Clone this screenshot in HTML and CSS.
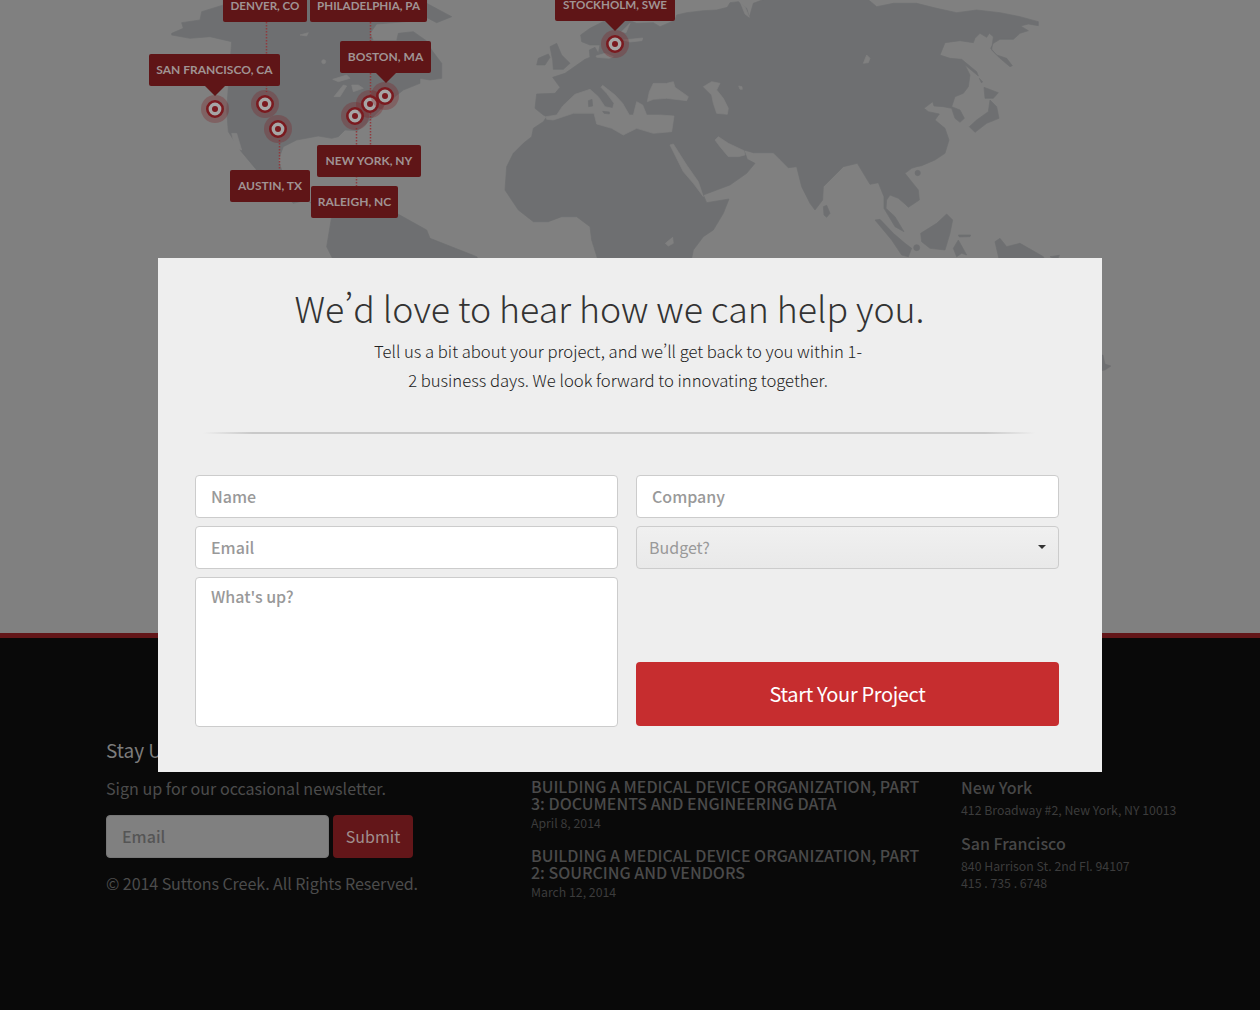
FILE: index.html
```html
<!DOCTYPE html>
<html lang="en">
<head>
<meta charset="utf-8">
<title>Suttons Creek</title>
<link rel="stylesheet" href="styles.css">
</head>
<body>
<section class="map">
  <svg class="map-art" viewBox="0 0 1260 633" width="1260" height="633" aria-hidden="true">
    <g class="land" transform="translate(490 0) scale(.33333)">
      <path d="M135,325 L140,282 195,280 210,262 188,232 225,220 285,178 300,172 298,150 315,142 325,160 330,135 300,135 275,125 272,105 300,85 345,62 420,62 440,70 490,68 510,80 545,65 555,60 560,45 590,38 640,32 680,30 712,22 720,8 745,5 770,25 778,52 790,10 830,-5 1130,-5 1160,20 1210,10 1280,10 1340,25 1400,38 1460,30 1530,38 1590,50 1645,65 1645,77 1615,72 1592,78 1615,92 1590,100 1570,118 1530,118 1510,130 1502,145 1520,165 1550,175 1567,197 1560,200 1530,175 1505,150 1510,110 1498,100 1490,112 1470,100 1455,115 1450,128 1410,122 1365,128 1350,165 1380,175 1415,178 1460,215 1465,228 1425,195 1440,225 1435,260 1420,280 1395,290 1385,320 1410,330 1423,355 1410,367 1395,355 1385,325 1360,320 1332,318 1328,305 1302,325 1315,335 1348,342 1335,360 1365,385 1377,420 1365,460 1335,480 1295,497 1280,500 1265,505 1245,520 1265,545 1285,570 1288,600 1255,622 1245,612 1225,595 1200,585 1190,600 1188,625 1215,650 1242,695 1215,680 1182,625 1182,590 1165,548 1140,553 1102,490 1060,500 1000,560 998,600 975,630 960,610 935,560 920,500 895,503 870,478 850,458 790,458 762,450 772,478 795,490 770,520 720,555 680,570 640,585 650,608 717,597 700,640 670,690 640,710 610,750 600,800 330,800 305,720 300,680 260,650 215,650 175,665 130,665 85,630 45,570 50,500 70,460 100,430 125,410 130,385 160,365 170,350 160,345 Z"/>
      <path d="M180,140 L200,130 215,165 240,190 220,208 190,208 188,180 Z"/>
      <path d="M145,175 L175,162 180,172 165,195 140,195 Z"/>
    </g>
    <g class="sea" transform="translate(490 0) scale(.33333)">
      <path d="M168,350 L200,345 218,318 255,283 300,268 325,290 345,320 368,325 372,310 350,280 333,262 338,256 375,285 398,310 418,345 430,345 440,305 458,315 470,345 510,345 552,348 545,395 490,400 440,385 400,405 365,385 320,372 312,340 250,340 190,360 170,358 Z"/>
      <path d="M478,275 L490,250 530,250 550,245 555,262 595,290 590,302 530,295 490,298 472,305 Z"/>
      <path d="M640,260 L665,245 690,250 680,270 700,295 715,325 712,343 680,340 670,310 665,285 Z"/>
      <path d="M540,435 L550,432 590,495 625,545 640,590 610,550 580,515 Z"/>
      <path d="M675,420 L685,410 715,430 762,452 765,465 745,470 715,470 690,440 Z"/>
      <path d="M318,168 L345,160 370,170 358,175 320,172 Z"/>
      <path d="M400,120 L458,114 456,122 420,126 Z"/>
      <path d="M395,95 L420,70 408,98 Z"/>
      <path d="M746,258 L756,260 757,268 750,268 Z"/>
      <path d="M526,730 L548,712 550,730 535,738 Z"/>
      <path d="M750,5 L765,20 778,52 765,42 Z"/>
      <path d="M1120,190 L1130,165 1140,175 1135,188 Z"/>
    </g>
    <g class="land" transform="translate(490 0) scale(.33333)">
      <path d="M295,302 L306,298 308,318 296,320 Z"/>
      <path d="M338,334 L358,336 358,342 342,340 Z"/>
    </g>
    <g class="land" transform="translate(780 0) scale(.33333)">
      <circle cx="413" cy="519" r="8"/>
      <circle cx="410" cy="743" r="9"/>
      <path d="M130,620 L140,616 150,640 140,652 132,645 Z"/>
      <path d="M612,262 L655,278 640,295 615,295 Z"/>
      <path d="M630,300 L650,320 657,355 620,370 585,397 568,380 590,360 625,335 Z"/>
      <path d="M598,235 L608,246 604,248 Z"/>
      <path d="M285,660 L300,658 340,700 375,730 395,745 385,770 365,765 335,720 Z"/>
      <path d="M422,700 L470,670 500,642 518,660 510,700 495,750 450,745 425,725 Z"/>
      <path d="M520,745 L535,720 560,765 545,760 530,770 Z"/>
      <path d="M535,705 L572,705 570,710 538,711 Z"/>
      <path d="M645,725 L660,715 680,740 720,730 790,770 800,790 660,790 Z"/>
      <path d="M810,770 L838,766 832,780 Z"/>
    </g>
    <path class="land" d="M1100,355 L1103,355 1105,364 1111,366 1105,370 1100,371 Z"/>
    <g class="land" transform="translate(150 0) scale(.33333)">
      <path d="M65,100 L100,85 95,68 150,60 155,35 220,15 220,-5 830,-5 830,60 680,72 660,100 670,122 740,122 745,100 790,95 830,123 845,150 875,190 875,235 840,240 810,235 810,250 760,270 710,310 650,370 622,392 585,390 565,410 545,415 505,408 440,420 400,440 385,480 395,510 440,580 470,600 545,650 530,740 560,800 1000,800 980,770 840,715 830,690 740,640 570,650 545,650 470,600 430,610 320,510 270,450 235,395 230,330 235,260 245,125 180,110 120,115 65,105 Z"/>
      <path d="M830,10 L905,50 860,68 825,50 Z"/>
    </g>
    <g class="sea" transform="translate(150 0) scale(.33333)">
      <path d="M548,238 L590,225 600,235 565,245 Z"/>
      <path d="M552,290 L580,255 590,258 570,290 Z"/>
      <path d="M605,255 L625,255 640,265 610,275 Z"/>
      <circle cx="521" cy="185" r="6"/>
      <path d="M450,105 L475,98 470,108 Z"/>
      <path d="M245,400 L260,400 275,450 255,445 Z"/>
    </g>
    <g class="leaders">
      <path d="M266.5 22V92M370.5 22V100M279.5 140V170M370.5 110V145M356.5 128V186"/>
    </g>
    <g class="pin" transform="translate(215 109)"><circle class="halo" r="14"/><circle class="ring" r="7.7"/><circle class="dot" r="3"/></g>
    <g class="pin" transform="translate(265 104)"><circle class="halo" r="14"/><circle class="ring" r="7.7"/><circle class="dot" r="3"/></g>
    <g class="pin" transform="translate(278 129)"><circle class="halo" r="14"/><circle class="ring" r="7.7"/><circle class="dot" r="3"/></g>
    <g class="pin" transform="translate(355 116)"><circle class="halo" r="14"/><circle class="ring" r="7.7"/><circle class="dot" r="3"/></g>
    <g class="pin" transform="translate(370 104)"><circle class="halo" r="14"/><circle class="ring" r="7.7"/><circle class="dot" r="3"/></g>
    <g class="pin" transform="translate(385 96)"><circle class="halo" r="14"/><circle class="ring" r="7.7"/><circle class="dot" r="3"/></g>
    <g class="pin" transform="translate(615 44)"><circle class="halo" r="14"/><circle class="ring" r="7.7"/><circle class="dot" r="3"/></g>
  </svg>
  <span class="tag tag-small tag-denver">Denver, CO</span>
  <span class="tag tag-small tag-phila">Philadelphia, PA</span>
  <span class="tag tag-sf tag-arrow">San Francisco, CA</span>
  <span class="tag tag-boston tag-arrow">Boston, MA</span>
  <span class="tag tag-ny">New York, NY</span>
  <span class="tag tag-austin">Austin, TX</span>
  <span class="tag tag-raleigh">Raleigh, NC</span>
  <span class="tag tag-small tag-stockholm tag-arrow">Stockholm, SWE</span>
</section>

<footer class="footer">
  <div class="footer-col news-signup">
    <h2 class="footer-title">Stay Updated</h2>
    <p class="footer-copy">Sign up for our occasional newsletter.</p>
    <form class="signup">
      <input class="signup-input" type="text" placeholder="Email">
      <button class="signup-btn" type="button">Submit</button>
    </form>
    <p class="footer-copy footer-legal">© 2014 Suttons Creek. All Rights Reserved.</p>
  </div>
  <div class="footer-col posts">
    <article class="post">
      <h3 class="post-title">Building a Medical Device Organization, Part 3: Documents and Engineering Data</h3>
      <p class="post-date">April 8, 2014</p>
    </article>
    <article class="post">
      <h3 class="post-title">Building a Medical Device Organization, Part 2: Sourcing and Vendors</h3>
      <p class="post-date">March 12, 2014</p>
    </article>
  </div>
  <div class="footer-col offices">
    <section class="office">
      <h3 class="office-name">New York</h3>
      <p class="office-line">412 Broadway #2, New York, NY 10013</p>
    </section>
    <section class="office">
      <h3 class="office-name">San Francisco</h3>
      <p class="office-line">840 Harrison St. 2nd Fl. 94107</p>
      <p class="office-line">415 . 735 . 6748</p>
    </section>
  </div>
</footer>

<div class="modal">
  <header class="intro">
    <h1 class="intro-title">We’d love to hear how we can help you.</h1>
    <p class="intro-text">Tell us a bit about your project, and we’ll get back to you within 1-<br>2 business days. We look forward to innovating together.</p>
    <div class="divider"></div>
  </header>
  <form class="contact">
    <input class="field" type="text" placeholder="Name">
    <input class="field" type="text" placeholder="Company">
    <input class="field" type="text" placeholder="Email">
    <div class="select-wrap">
      <select class="select"><option>Budget?</option></select>
    </div>
    <textarea class="field field-area" placeholder="What's up?"></textarea>
    <button class="start" type="button">Start Your Project</button>
  </form>
</div>
</body>
</html>
```

FILE: styles.css
```css
* { box-sizing: border-box; }
html, body { margin: 0; padding: 0; }
body {
  position: relative;
  width: 1260px;
  height: 1010px;
  overflow: hidden;
  background: #090909;
  font-family: "Noto Sans CJK SC", "Source Sans Pro", "Open Sans", sans-serif;
  font-size: 16px;
}

/* map */
.map {
  position: relative;
  height: 633px;
  overflow: hidden;
  background: #808080;
}
.map-art { display: block; }
.land { fill: #6e6f71; stroke: #6e6f71; stroke-width: 2; stroke-linejoin: round; }
.sea { fill: #808080; stroke: #808080; stroke-width: 2; stroke-linejoin: round; }
path.land { stroke-width: .5; }
.leaders path { fill: none; stroke: #8f3a3e; stroke-width: 1.5; stroke-dasharray: 1.5 1.5; }
.halo { fill: #7f1d22; fill-opacity: .3; }
.ring { fill: #a6a6a6; stroke: #7a1a1f; stroke-width: 2.6; }
.dot { fill: #7a1a1f; }

.tag {
  position: absolute;
  height: 32px;
  padding: 0 2px;
  border-radius: 2px;
  background: #5f1517;
  color: #a09393;
  font-family: Lato, "Liberation Sans", sans-serif;
  font-size: 12px;
  font-weight: 700;
  line-height: 32px;
  text-align: center;
  text-transform: uppercase;
  white-space: nowrap;
}
.tag-small { font-size: 11.6px; }
.tag-arrow::after {
  content: "";
  position: absolute;
  left: 50%;
  top: 100%;
  margin-left: -10px;
  border: solid transparent;
  border-width: 10px 10px 0;
  border-top-color: #5f1517;
}
.tag-denver { left: 223px; top: -10px; width: 84px; }
.tag-phila { left: 310px; top: -10px; width: 117px; }
.tag-sf { left: 149px; top: 54px; width: 131px; }
.tag-boston { left: 340px; top: 41px; width: 91px; }
.tag-ny { left: 317px; top: 145px; width: 104px; }
.tag-austin { left: 230px; top: 170px; width: 80px; }
.tag-raleigh { left: 311px; top: 186px; width: 87px; }
.tag-stockholm { left: 555px; top: -11px; width: 120px; }

/* footer */
.footer {
  display: grid;
  grid-template-columns: 425px 430px 1fr;
  height: 377px;
  padding-left: 106px;
  border-top: 5px solid #631619;
  background: #090909;
}
.footer-col { min-width: 0; }
.news-signup { padding-top: 97px; }
.posts { padding-top: 140px; padding-right: 30px; }
.offices { padding-top: 138px; }
.footer-title {
  margin: 0 0 10px;
  color: #7c7c7c;
  font-size: 19px;
  font-weight: 400;
  line-height: 30px;
  white-space: nowrap;
}
.footer-copy {
  margin: 0;
  color: #4c4c4c;
  font-size: 16.1px;
  line-height: 26px;
}
.footer-legal { letter-spacing: -.1px; }
.signup { display: flex; gap: 4px; margin: 14px 0 12px; }
.signup-input {
  width: 223px;
  height: 43px;
  padding: 0 15px 2px;
  border: 1px solid #767676;
  border-radius: 4px;
  background: #808080;
  font: inherit;
  font-weight: 500;
}
.signup-input::placeholder { color: #555; opacity: 1; }
.signup-btn {
  width: 80px;
  height: 43px;
  padding: 0 0 2px;
  border: 0;
  border-radius: 4px;
  background: #631619;
  color: #a08f8f;
  font: inherit;
}
.post { margin-bottom: 15px; }
.post-title {
  margin: 0;
  color: #4a4a4a;
  font-size: 16px;
  font-weight: 500;
  line-height: 17px;
  text-transform: uppercase;
}
.post-date { margin: 3px 0 0; color: #3c3c3c; font-size: 12.3px; line-height: 17px; }
.office { margin-bottom: 13px; }
.office-name { margin: 0 0 4px; color: #474747; font-size: 16px; font-weight: 500; line-height: 22px; }
.office-line { margin: 0; color: #3c3c3c; font-size: 12.3px; line-height: 17px; }

/* modal */
.modal {
  position: absolute;
  left: 158px;
  top: 258px;
  width: 944px;
  height: 514px;
  padding: 23px 43px 0 37px;
  background: #eeeeee;
}
.intro { width: 846px; text-align: center; font-feature-settings: "pwid", "palt"; }
.intro-title {
  margin: 0 17px 2px 0;
  color: #333;
  font-size: 35.7px;
  font-weight: 300;
  line-height: 54px;
  white-space: nowrap;
}
.intro-text {
  margin: 0;
  color: #222;
  font-size: 16.65px;
  font-weight: 300;
  line-height: 29px;
}
.divider {
  height: 2px;
  margin: 37px 6px 41px 8px;
  background: linear-gradient(90deg, rgba(200,200,200,0), #c9c9c9 6%, #c9c9c9 94%, rgba(200,200,200,0));
}
.contact {
  display: grid;
  grid-template-columns: 423px 423px;
  grid-template-rows: 43px 43px 150px;
  column-gap: 18px;
  row-gap: 8px;
}
.field {
  display: block;
  width: 100%;
  padding: 0 15px 2px;
  border: 1px solid #ccc;
  border-radius: 4px;
  background: #fff;
  color: #333;
  font: inherit;
  font-weight: 500;
}
.field::placeholder { color: #999; opacity: 1; }
.field-area { height: 150px; padding-top: 6px; resize: none; }
.select-wrap { position: relative; }
.select-wrap::after {
  content: "";
  position: absolute;
  right: 13px;
  top: 19px;
  border: solid transparent;
  border-width: 4px 4px 0;
  border-top-color: #333;
}
.select {
  display: block;
  width: 100%;
  height: 100%;
  padding: 0 12px 2px;
  border: 1px solid #ccc;
  border-radius: 4px;
  background: linear-gradient(#f0f0f0, #e9e9e9);
  color: #999;
  font: inherit;
  appearance: none;
}
.start {
  align-self: end;
  height: 64px;
  margin-bottom: 1px;
  padding-bottom: 3px;
  border: 0;
  border-radius: 4px;
  background: #c62d2f;
  color: #fff;
  font: inherit;
  font-size: 20px;
  letter-spacing: -.35px;
}
```
